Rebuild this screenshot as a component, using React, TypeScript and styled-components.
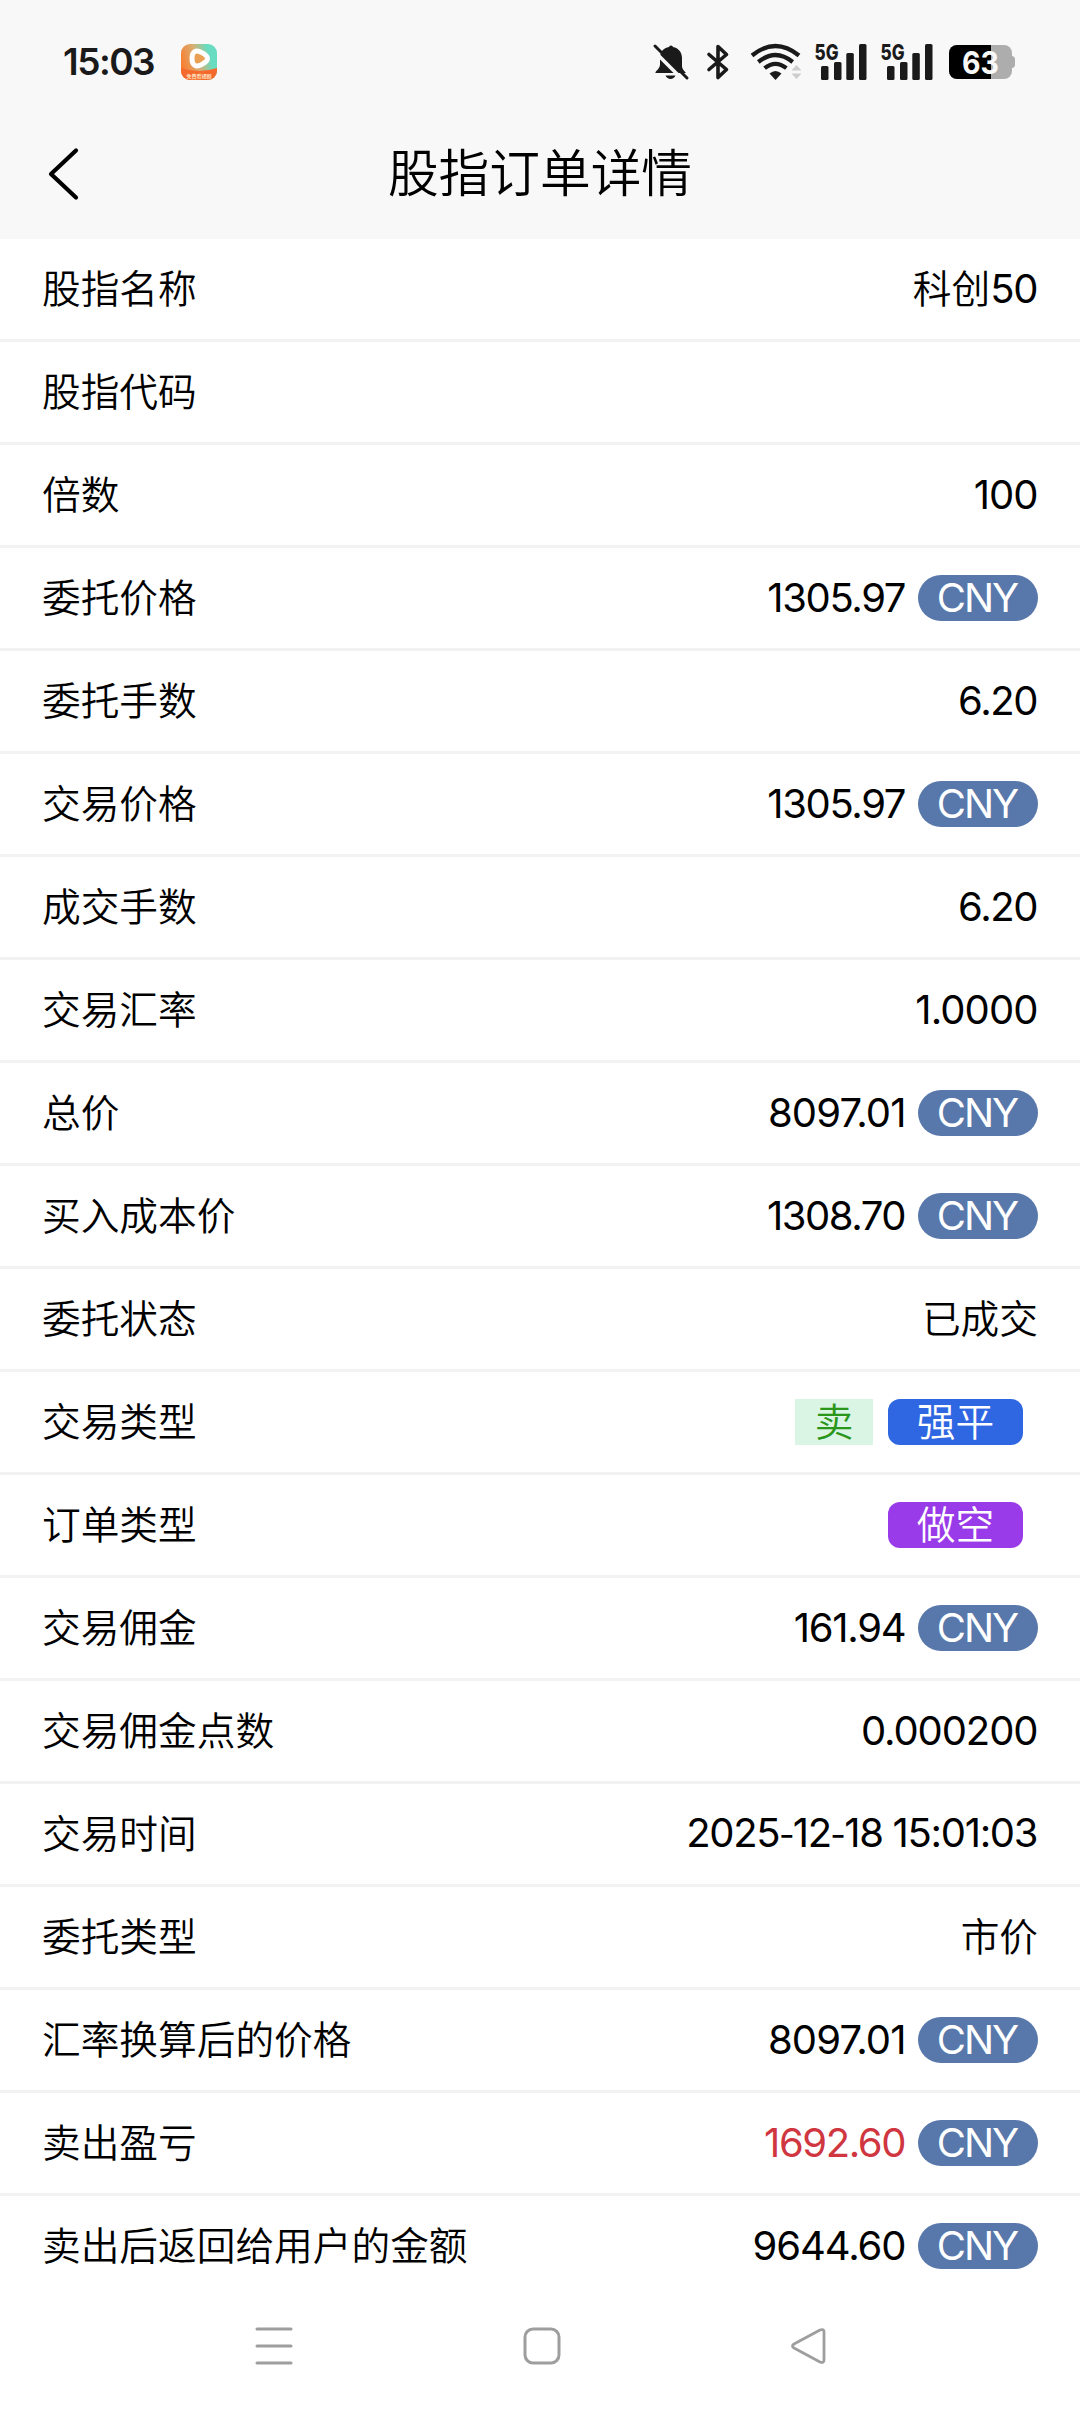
import React from 'react';
import styled, { createGlobalStyle } from 'styled-components';

const GlobalStyle = createGlobalStyle`
  *, *::before, *::after { box-sizing: border-box; }
  body { margin: 0; background: #fff; }
`;

const FONT = `Inter, "Noto Sans CJK SC", sans-serif`;

const Screen = styled.div`
  width: 1080px;
  height: 2412px;
  display: flex;
  flex-direction: column;
  overflow: hidden;
  background: #fff;
  color: #000;
  font-family: ${FONT};
`;

const Top = styled.header`
  height: 239px;
  flex: none;
  display: flex;
  flex-direction: column;
  background: #f8f8f8;
`;

const StatusBar = styled.div`
  height: 124px;
  padding: 0 65px 0 63px;
  display: flex;
  align-items: center;
  justify-content: space-between;
  color: #1a1a1a;
`;

const StatusGroup = styled.div`
  display: flex;
  align-items: center;
`;

const Clock = styled.span`
  width: 118px;
  font-size: 37px;
  line-height: 44px;
  font-weight: 630;
  letter-spacing: -1.5px;
  white-space: nowrap;
`;

const StatusIcon = styled.svg<{ $gap?: number }>`
  display: block;
  flex: none;
  overflow: visible;
  margin-left: ${p => p.$gap ?? 0}px;
`;

const TitleBar = styled.div`
  height: 99px;
  display: grid;
  grid-template-columns: 120px 1fr 120px;
  align-items: center;
`;

const BackButton = styled.button`
  padding: 0 0 0 46px;
  border: 0;
  background: none;
  display: flex;
`;

const Title = styled.h1`
  margin: 0;
  text-align: center;
  font-size: 50.7px;
  line-height: 60px;
  font-weight: 350;
`;

const List = styled.main`
  flex: none;
  display: flex;
  flex-direction: column;
`;

const Row = styled.div`
  height: 103px;
  padding: 0 42px 0 42px;
  border-bottom: 3px solid #f2f2f2;
  display: flex;
  align-items: center;
  justify-content: space-between;
  font-size: 38.7px;
  line-height: 46px;
  font-weight: 350;
  &:last-child { height: 100px; border-bottom: 0; }
`;

const Label = styled.span`
  white-space: nowrap;
`;

const ValueGroup = styled.div`
  display: flex;
  align-items: center;
`;

const Value = styled.span<{ $red?: boolean }>`
  white-space: nowrap;
  color: ${p => (p.$red ? '#d0363f' : '#000')};
`;

const Num = styled.span<{ $track?: number }>`
  font-size: 40px;
  font-weight: 375;
  letter-spacing: ${p => p.$track ?? 0}px;
  margin-right: ${p => -(p.$track ?? 0) - 0.5}px;
`;

const Hyphen = styled.span`
  font-size: 34px;
  margin: 0 -0.5px;
`;

const Currency = styled.span`
  width: 120px;
  height: 46px;
  margin-left: 12px;
  padding-right: 2px;
  border-radius: 23px;
  background: #5877aa;
  color: #fff;
  font-size: 40px;
  font-weight: 370;
  letter-spacing: -2px;
  text-align: center;
`;

const Tag = styled.span<{ $bg: string; $fg: string; $w: number; $r: number }>`
  width: ${p => p.$w}px;
  height: 46px;
  margin-right: 15px;
  border-radius: ${p => p.$r}px;
  background: ${p => p.$bg};
  color: ${p => p.$fg};
  text-align: center;
`;

const NavBar = styled.nav`
  flex: 1;
  padding: 0 251px 17px 254px;
  display: flex;
  align-items: center;
  justify-content: space-between;
`;

type Item = {
  label: string;
  text?: string;
  num?: string;
  cny?: boolean;
  red?: boolean;
  track?: number;
  tags?: { text: string; bg: string; fg: string; w: number; r: number }[];
};

const ITEMS: Item[] = [
  { label: '股指名称', text: '科创', num: '50', track: -1.2 },
  { label: '股指代码' },
  { label: '倍数', num: '100', track: -1 },
  { label: '委托价格', num: '1305.97', cny: true, track: -1.35 },
  { label: '委托手数', num: '6.20', track: -1.4 },
  { label: '交易价格', num: '1305.97', cny: true, track: -1.35 },
  { label: '成交手数', num: '6.20', track: -1.4 },
  { label: '交易汇率', num: '1.0000', track: -0.9 },
  { label: '总价', num: '8097.01', cny: true, track: -0.85 },
  { label: '买入成本价', num: '1308.70', cny: true, track: -1.45 },
  { label: '委托状态', text: '已成交' },
  {
    label: '交易类型',
    tags: [
      { text: '卖', bg: '#dbf5e4', fg: '#2a961a', w: 78, r: 0 },
      { text: '强平', bg: '#2f66e2', fg: '#fff', w: 135, r: 12 },
    ],
  },
  { label: '订单类型', tags: [{ text: '做空', bg: '#993be8', fg: '#fff', w: 135, r: 12 }] },
  { label: '交易佣金', num: '161.94', cny: true, track: -1.3 },
  { label: '交易佣金点数', num: '0.000200', track: -1.1 },
  { label: '交易时间', num: '2025-12-18 15:01:03', track: -1.3 },
  { label: '委托类型', text: '市价' },
  { label: '汇率换算后的价格', num: '8097.01', cny: true, track: -0.85 },
  { label: '卖出盈亏', num: '1692.60', cny: true, red: true, track: -1.4 },
  { label: '卖出后返回给用户的金额', num: '9644.60', cny: true, track: -1.1 },
];

const AppBadge = () => (
  <StatusIcon width="36" height="36" viewBox="0 0 36 36">
    <defs>
      <linearGradient id="sky" x1="0" y1="0.6" x2="1" y2="0.3">
        <stop offset="0" stopColor="#fb7b2c" />
        <stop offset="0.45" stopColor="#d9ae72" />
        <stop offset="0.8" stopColor="#68dcc0" />
      </linearGradient>
      <clipPath id="tile"><rect width="36" height="36" rx="9" /></clipPath>
    </defs>
    <g clipPath="url(#tile)">
      <rect width="36" height="36" fill="url(#sky)" />
      <path d="M0 24Q18 30 36 24V36H0Z" fill="#f56a2c" />
      <path d="M14 7.500C17 5.500 26.500 11 26.500 14.500C26.500 18 17 23.500 14 21.500C10 19.500 10 9.500 14 7.500Z" fill="#e9a052" stroke="#fff" strokeWidth="5" strokeLinejoin="round" />
      <text x="18" y="33.500" textAnchor="middle" fontSize="5" fontWeight="700" fill="#ffe0c0">免费看短剧</text>
    </g>
  </StatusIcon>
);

const BellOff = () => (
  <StatusIcon width="36" height="36" viewBox="0 0 36 36">
    <path d="M18 1.500a2 2 0 0 1 2 1.600c5.500 1 9 5.300 9 11v7.500c0 3 1 4 4 7.500H2.500c-1-1.500 4.500-4 4.500-8.500V14C7 8 10.500 4 16 3.100A2 2 0 0 1 18 1.500Z" fill="#1a1a1a" />
    <path d="M12.500 31.500h10c-1 2.300-2.800 3.500-5 3.500s-4-1.200-5-3.500Z" fill="#1a1a1a" />
    <path d="M-1 5L31 37" stroke="#f8f8f8" strokeWidth="3.500" />
    <path d="M2 2L34 34" stroke="#1a1a1a" strokeWidth="3" strokeLinecap="round" />
  </StatusIcon>
);

const Bluetooth = () => (
  <StatusIcon $gap={18} width="22" height="36" viewBox="0 0 22 36">
    <path d="M2 10.500L19.500 25.500L11 33.500V2.500L19.500 10.500L2 25.500" fill="none" stroke="#1a1a1a" strokeWidth="3.600" strokeLinecap="round" strokeLinejoin="round" />
  </StatusIcon>
);

const Wifi = () => (
  <StatusIcon $gap={22} width="51" height="36" viewBox="0 0 51 36">
    <g fill="none" stroke="#1a1a1a" strokeWidth="4.200">
      <path d="M1 11.500Q24.500-7.500 48 11.500" />
      <path d="M7.300 18Q24.500 4 41.700 18" />
      <path d="M13.600 24.200Q24.500 15.500 35.400 24.200" />
    </g>
    <path d="M18.500 29.500Q24.500 24.500 30.500 29.500L24.500 36Z" fill="#1a1a1a" />
    <path d="M40.500 26.500L45.500 21L50.500 26.500ZM40.500 29.500L45.500 35L50.500 29.500Z" fill="#cdcdcd" />
  </StatusIcon>
);

const Signal = ({ gap }: { gap: number }) => (
  <StatusIcon $gap={gap} width="52" height="38" viewBox="0 0 52 38">
    <text x="-0.500" y="16.500" fontSize="22" fontWeight="800" textLength="24" lengthAdjust="spacingAndGlyphs" fill="#1a1a1a">5G</text>
    <g fill="#1a1a1a">
      <rect x="6" y="23" width="7.500" height="14" rx="1.500" />
      <rect x="19" y="19" width="7.500" height="18" rx="1.500" />
      <rect x="31.300" y="10" width="7.500" height="27" rx="1.500" />
      <rect x="44" y="1" width="7.500" height="36" rx="1.500" />
    </g>
  </StatusIcon>
);

const Battery = () => (
  <StatusIcon $gap={16} width="66" height="34" viewBox="0 0 66 34">
    <defs><clipPath id="cell"><rect width="63" height="34" rx="8" /></clipPath></defs>
    <rect x="58" y="11" width="8" height="12" rx="3.500" fill="#adadad" />
    <g clipPath="url(#cell)">
      <rect width="63" height="34" fill="#adadad" />
      <rect width="42" height="34" fill="#000" />
    </g>
    <text x="31.500" y="28.500" textAnchor="middle" fontSize="31" fontWeight="650" textLength="37" lengthAdjust="spacingAndGlyphs" fill="#f8f8f8">63</text>
  </StatusIcon>
);

const Digits = ({ value }: { value: string }) => (
  <>
    {value.split('-').map((part, i) => (
      <React.Fragment key={i}>
        {i > 0 && <Hyphen>-</Hyphen>}
        {part}
      </React.Fragment>
    ))}
  </>
);

export default function App() {
  return (
    <Screen>
      <GlobalStyle />
      <Top>
        <StatusBar>
          <StatusGroup>
            <Clock>15:03</Clock>
            <AppBadge />
          </StatusGroup>
          <StatusGroup>
            <BellOff />
            <Bluetooth />
            <Wifi />
            <Signal gap={13} />
            <Signal gap={14} />
            <Battery />
          </StatusGroup>
        </StatusBar>
        <TitleBar>
          <BackButton aria-label="返回">
            <svg width="36" height="56" viewBox="0 0 36 56">
              <path d="M30 4.500L5 28L30 51.500" fill="none" stroke="#000" strokeWidth="4.200" strokeLinecap="round" strokeLinejoin="round" />
            </svg>
          </BackButton>
          <Title>股指订单详情</Title>
        </TitleBar>
      </Top>
      <List>
        {ITEMS.map(it => (
          <Row key={it.label}>
            <Label>{it.label}</Label>
            <ValueGroup>
              {(it.text || it.num) && (
                <Value $red={it.red}>
                  {it.text}
                  {it.num && <Num $track={it.track}><Digits value={it.num} /></Num>}
                </Value>
              )}
              {it.cny && <Currency>CNY</Currency>}
              {it.tags?.map(t => (
                <Tag key={t.text} $bg={t.bg} $fg={t.fg} $w={t.w} $r={t.r}>{t.text}</Tag>
              ))}
            </ValueGroup>
          </Row>
        ))}
      </List>
      <NavBar>
        <svg width="40" height="40" viewBox="0 0 40 40">
          <path d="M3 3H37M3 20H37M3 37H37" stroke="#9e9e9e" strokeWidth="3" strokeLinecap="round" />
        </svg>
        <svg width="40" height="40" viewBox="0 0 40 40">
          <rect x="3" y="3" width="34" height="34" rx="8" fill="none" stroke="#9e9e9e" strokeWidth="3" />
        </svg>
        <svg width="40" height="40" viewBox="0 0 40 40">
          <path d="M5 18L31 4Q35 2.500 35 6V34Q35 37.500 31 36L5 22Q2 20 5 18Z" fill="none" stroke="#9e9e9e" strokeWidth="2.800" strokeLinejoin="round" />
        </svg>
      </NavBar>
    </Screen>
  );
}
